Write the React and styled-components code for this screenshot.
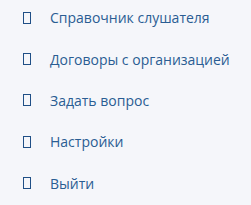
import React from "react";
import styled, { createGlobalStyle } from "styled-components";

const Global = createGlobalStyle`
  html, body { margin: 0; padding: 0; background: #f5f6fa; }
  body { font-family: "Open Sans", "Noto Sans", sans-serif; }
`;

const Menu = styled.nav`
  width: 251px;
  height: 205px;
  box-sizing: border-box;
  background: #f5f6fa;
  display: flex;
  flex-direction: column;
  overflow: hidden;
`;

const Item = styled.a`
  display: flex;
  align-items: center;
  flex: none;
  height: 41.4px;
  padding-left: 23px;
  color: #2a5d93;
  font-size: 14px;
  text-decoration: none;
  box-sizing: border-box;
  margin-top: ${(p) => (p.$first ? "-3px" : "0")};
`;

const Icon = styled.span`
  width: 8px;
  height: 12px;
  box-sizing: border-box;
  border: 1px solid #1f4f86;
  margin-right: 19px;
  flex: none;
`;

const items = [
  "Справочник слушателя",
  "Договоры с организацией",
  "Задать вопрос",
  "Настройки",
  "Выйти",
];

export default function App() {
  return (
    <>
      <Global />
      <Menu>
        {items.map((t, i) => (
          <Item key={t} href="#" $first={i === 0}>
            <Icon />
            {t}
          </Item>
        ))}
      </Menu>
    </>
  );
}
